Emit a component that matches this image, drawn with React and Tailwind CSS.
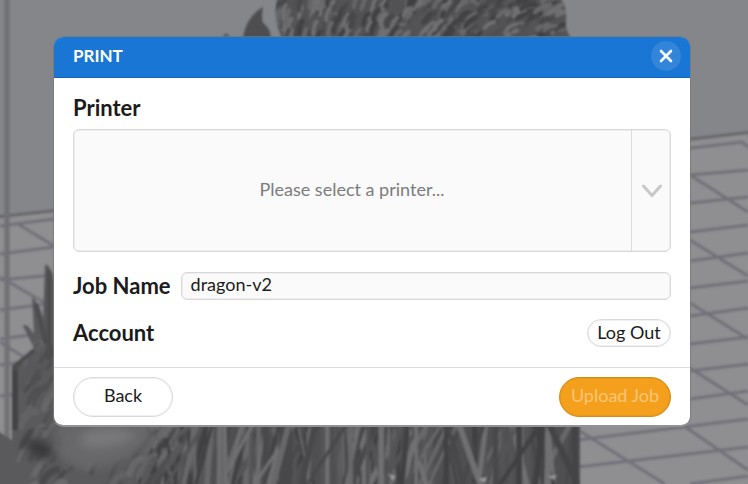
import { useState } from "react";

const FLOOR_LINES = [
  "M0 226L54 219L691 148L742 142L748 147",
  "M0 254L54 247", "M0 280L54 275", "M0 310L54 303", "M0 339L54 332", "M0 365L54 358",
  "M0 396L54 390", "M18 224L54 246", "M0 277L54 308", "M0 342L54 376",
  "M690 175L748 170", "M690 203L748 197", "M690 232L748 225",
  "M690 261L748 253", "M690 288L748 281", "M690 316L748 308",
  "M690 344L748 337", "M690 371L748 364", "M690 399L748 391",
  "M578 440L748 419", "M578 467L748 447", "M690 484L748 476",
  "M690 175L748 212", "M690 240L748 276", "M690 303L748 339", "M690 368L748 405",
  "M578 430L665 484", "M684 426L748 470",
];

const SHADES = ["#404042", "#68686a", "#48484a", "#707072", "#545456"];

// Deterministic scatter, so that the model looks the same on every render.
function scatter(count, seed, make) {
  let s = seed;
  const rand = () => {
    s = (s * 16807) % 2147483647;
    return s / 2147483647;
  };
  return Array.from({ length: count }, (_, i) => make(rand, i));
}

const SCALES = scatter(300, 71, (r, i) => {
  const x = 278 + r() * 288;
  const y = -4 + r() * 44;
  const right = (x - 278) / 288;
  const dx = 1 + right * 5;
  const dy = 7 - right * 5;
  return {
    d: `M${x - dx} ${y + dy}Q${x - 2} ${y - 2} ${x + dx} ${y - dy}`,
    c: SHADES[i % 5],
    w: 3 + r() * 2,
  };
});

const BODY = scatter(150, 913, (r, i) => {
  const x = 14 + r() * 160;
  const y = 345 + r() * 145;
  return {
    d: `M${x} ${y + 10}q${3 + r() * 5} ${-9 - r() * 8} ${8 + r() * 9} ${-12 - r() * 8}`,
    c: ["#505053", "#626265", "#58585b", "#68686a", "#4a4a4d"][i % 5],
    w: 3 + r() * 4,
  };
});

const SUPPORTS = scatter(190, 377, (r, i) => {
  const x = 130 + r() * 445;
  const lean = i % 3 === 0 ? 0 : (r() - 0.35) * 70;
  return {
    d: `M${x} 488L${x + lean} ${418 + r() * 10}`,
    c: SHADES[i % 5],
    w: 2 + r() * 4,
  };
});

function Strokes({ items }) {
  return items.map((p, i) => (
    <path key={i} d={p.d} stroke={p.c} strokeWidth={p.w} strokeLinecap="round" fill="none" />
  ));
}

function Scene() {
  return (
    <svg
      className="absolute inset-0 h-full w-full"
      viewBox="0 0 748 484"
      preserveAspectRatio="xMidYMid slice"
      aria-hidden="true"
    >
      <defs>
        <filter id="soft" x="-5%" y="-5%" width="110%" height="110%" colorInterpolationFilters="sRGB">
          <feGaussianBlur stdDeviation="1.3" />
        </filter>
        <filter id="haze" x="-20%" y="-20%" width="140%" height="140%" colorInterpolationFilters="sRGB">
          <feGaussianBlur stdDeviation="5" />
        </filter>
        <clipPath id="crest">
          <path d="M277 0Q273 20 282 38H571Q564 30 566 18Q567 4 558 -4H277Z" />
        </clipPath>
        <clipPath id="torso">
          <path d="M12 366L34 348L23 326Q26 322 34 334L32 297Q38 300 43 318L45 265Q49 262 54 280V420H190V488H-4V430L12 440Z" />
        </clipPath>
        <clipPath id="lattice">
          <path d="M120 420H580V488H120Z" />
        </clipPath>
      </defs>
      <rect width="748" height="484" fill="#85868a" />
      <path d="M0 217L748 133V484H0Z" fill="#8f8f91" />
      <g filter="url(#soft)">
        <path d={FLOOR_LINES.join("")} stroke="#72717a" strokeWidth="3" fill="none" />
        <path d="M-4 217L374 176L752 132" stroke="#68686d" strokeWidth="3" fill="none" />
        <path d="M7 -5V490" stroke="#717175" strokeWidth="5" />
        <path d="M243 38Q246 17 263 7Q261 18 263 23Q270 27 271 38Z" fill="#4e4e50" />
        <path d="M222 38L226 33L231 38Z" fill="#58585a" />
        <g clipPath="url(#crest)">
          <rect x="270" y="-5" width="305" height="45" fill="#525254" />
          <Strokes items={SCALES} />
        </g>
        <g clipPath="url(#lattice)">
          <rect x="120" y="418" width="460" height="70" fill="#4f4f51" />
          <Strokes items={SUPPORTS} />
          <path d="M575 420V488M549 424L579 488" stroke="#444446" strokeWidth="6" />
          <path d="M388 474l8 2-3 5zM478 479l9-2-2 6zM548 476l9-1-3 5z" fill="#9a9a9c" />
        </g>
        <g clipPath="url(#torso)">
          <path d="M-4 260H140Q165 440 130 488H-4Z" fill="#5a5a5d" />
          <Strokes items={BODY} />
          <path d="M15 370V430" stroke="#434345" strokeWidth="6" />
          <path d="M12 368L34 350" stroke="#4a4a4c" strokeWidth="4" />
          <g filter="url(#haze)">
            <path d="M56 424H150Q160 446 120 462Q80 478 58 456Z" fill="#68686b" />
            <path d="M82 434Q110 422 138 434Q112 452 82 446Z" fill="#79797b" />
            <path d="M24 442Q44 432 56 458Q36 464 24 442Z" fill="#38383a" />
          </g>
          <path d="M49 270V360M36 304L46 344" stroke="#4d4d50" strokeWidth="5" />
        </g>
      </g>
    </svg>
  );
}

export default function App() {
  const [jobName, setJobName] = useState("dragon-v2");

  return (
    <main className="relative min-h-screen overflow-hidden bg-[#85868a] pt-9 pr-[57px] pb-9 pl-[53px] font-['Lato',sans-serif] text-lg text-[#1b1b1b]">
      <Scene />
      <form
        role="dialog"
        aria-labelledby="dialog-title"
        onSubmit={(e) => e.preventDefault()}
        className="relative overflow-hidden rounded-[10px] border border-b-2 border-[#777777]/70 border-b-[#929294] bg-white bg-clip-padding"
      >
        <header className="flex h-[41px] items-center justify-between border-b border-[#1565b8] bg-[#1a76d4] pr-[9px] pb-[2px] pl-[19px]">
          <h1 id="dialog-title" className="text-[17px] leading-5 font-bold text-white">PRINT</h1>
          <button
            type="button"
            aria-label="Close"
            className="flex size-[30px] items-center justify-center rounded-full bg-[#3285d9]"
          >
            <svg viewBox="0 0 14 14" className="size-[14px]" fill="none" stroke="white" strokeWidth="2.6" strokeLinecap="round">
              <path d="M2 2L12 12M12 2L2 12" />
            </svg>
          </button>
        </header>

        <div className="px-[19px] pt-4 pb-5">
          <label htmlFor="printer" className="block text-[22px] leading-7 font-bold">Printer</label>
          <div className="relative mt-[7px]">
            <select
              id="printer"
              defaultValue=""
              className="block h-[123px] w-full appearance-none rounded-md border border-[#d8d8d8] bg-[#fafafa] pr-10 pb-1 text-center text-lg text-[#7c7c7c] shadow-[inset_0_0_0_1px_#eeeeee] [text-align-last:center]"
            >
              <option value="">Please select a printer...</option>
            </select>
            <span className="pointer-events-none absolute inset-y-0 right-0 flex w-10 items-center justify-center border-l border-[#dcdcdc]">
              <svg viewBox="0 0 20 14" className="h-[14px] w-5" fill="none" stroke="#c8c8ca" strokeWidth="3" strokeLinecap="round" strokeLinejoin="round">
                <path d="M1.5 2L10 11.5L18.5 2" />
              </svg>
            </span>
          </div>

          <div className="mt-5 flex items-center gap-[10px]">
            <label htmlFor="job-name" className="text-[22px] leading-7 font-bold">Job Name</label>
            <input
              id="job-name"
              type="text"
              value={jobName}
              onChange={(e) => setJobName(e.target.value)}
              className="h-7 min-w-0 flex-1 rounded-md border border-[#d8d8d8] bg-[#fafafa] px-[9px] pb-1 text-lg leading-6 shadow-[inset_0_0_0_1px_#eeeeee]"
            />
          </div>

          <div className="mt-[19px] flex items-center justify-between">
            <h2 className="text-[22px] leading-7 font-bold">Account</h2>
            <button type="button" className="h-7 w-[84px] rounded-full border border-[#dadada] bg-white pb-1 text-lg leading-6 shadow-[inset_0_0_0_1px_#f0f0f0]">
              Log Out
            </button>
          </div>
        </div>

        <footer className="flex items-center justify-between border-t border-[#dcdcdc] px-[19px] pt-[9px] pb-2">
          <button type="button" className="h-10 w-[100px] rounded-full border border-[#dadada] bg-white pb-1 text-lg shadow-[inset_0_0_0_1px_#f0f0f0]">
            Back
          </button>
          <button
            type="submit"
            disabled
            className="h-10 w-28 rounded-full border border-[#d28c1a] bg-[#f4a01c] pb-1 text-lg text-[#fac677] shadow-[inset_0_0_0_1px_#e89a1c]"
          >
            Upload Job
          </button>
        </footer>
      </form>
    </main>
  );
}
